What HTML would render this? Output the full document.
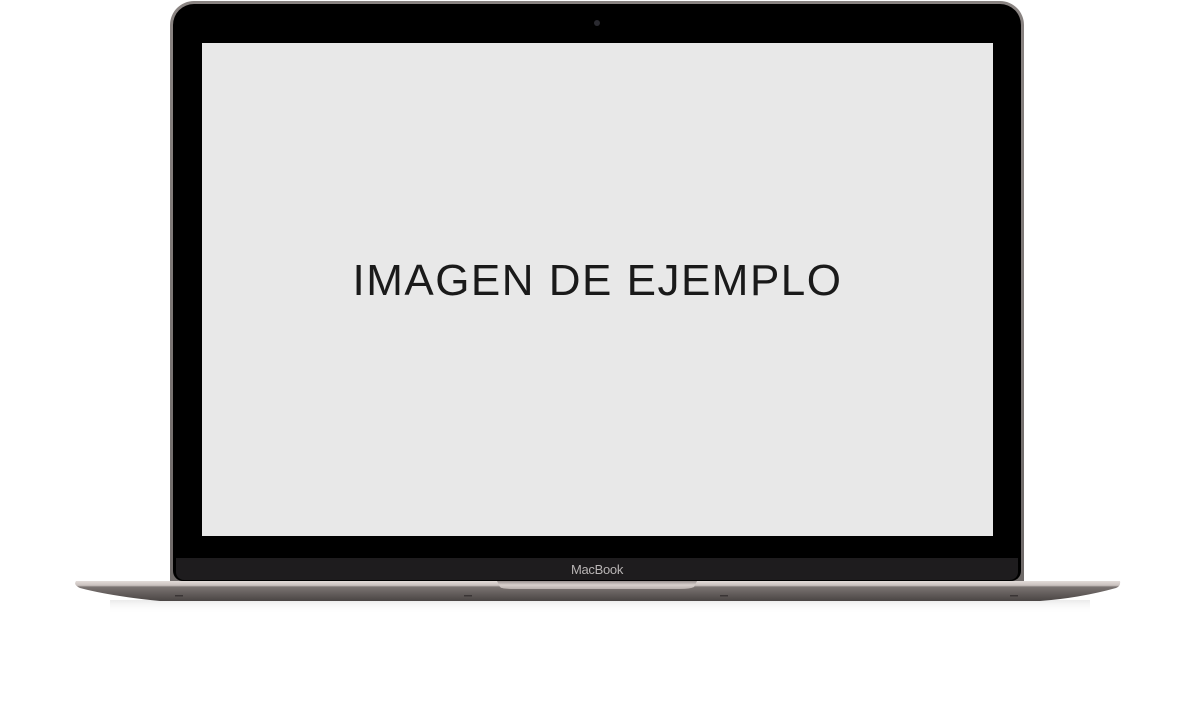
<!DOCTYPE html>
<html><head><style>
html,body{margin:0;padding:0;background:#fff;width:1204px;height:727px;overflow:hidden;position:relative;font-family:"Liberation Sans",sans-serif}
.lid{position:absolute;left:170px;top:1px;width:854px;height:585px;border-radius:24px 24px 0 0;background:linear-gradient(#8a8482,#6e6968);}
.inner{position:absolute;left:173px;top:4px;width:848px;height:577px;border-radius:21px 21px 10px 10px;background:#000;}
.chin{position:absolute;left:176px;top:558px;width:842px;height:22px;background:#1e1c1e;border-radius:0 0 8px 8px;}
.screen{position:absolute;left:202px;top:43px;width:791px;height:493px;background:#e8e8e8;}
.cam{position:absolute;left:594px;top:20px;width:6px;height:6px;border-radius:50%;background:#2a2a30;}
.txt{position:absolute;left:202px;width:791px;top:253px;text-align:center;font-size:44px;letter-spacing:1.5px;color:#1a1a1a;line-height:56px}
.mb{position:absolute;left:0;width:1194px;top:562px;text-align:center;font-size:13px;color:#b8b4b4;letter-spacing:-0.3px}
</style></head><body>
<div class="lid"></div>
<div class="inner"></div>
<div class="chin"></div>
<div class="screen"></div>
<div class="cam"></div>
<div class="txt">IMAGEN DE EJEMPLO</div>
<div class="mb">MacBook</div>
<svg style="position:absolute;left:0;top:0" width="1204" height="727">
<defs>
<linearGradient id="b" x1="0" y1="0" x2="0" y2="1">
<stop offset="0" stop-color="#e2dbd8"/><stop offset="0.22" stop-color="#c9c1be"/><stop offset="0.3" stop-color="#7a7371"/><stop offset="1" stop-color="#4a4544"/>
</linearGradient>
<linearGradient id="n" x1="0" y1="0" x2="0" y2="1">
<stop offset="0" stop-color="#9a9290"/><stop offset="0.5" stop-color="#d8d0cd"/><stop offset="1" stop-color="#b8b0ad"/>
</linearGradient>
<linearGradient id="s" x1="0" y1="0" x2="0" y2="1">
<stop offset="0" stop-color="#ddd" stop-opacity="0.6"/><stop offset="1" stop-color="#fff" stop-opacity="0"/>
</linearGradient>
</defs>
<rect x="110" y="600" width="980" height="14" fill="url(#s)"/>
<path d="M76 581 L1120 581 Q1121 586 1116 588 Q1080 598 1040 601 L160 601 Q110 596 80 588 Q73 585 76 581 Z" fill="url(#b)"/>
<path d="M497 581 L697 581 L694 587 Q690 589 680 589 L514 589 Q502 589 500 587 Z" fill="url(#n)"/>
<rect x="175" y="595" width="8" height="1.5" fill="#3a3535"/>
<rect x="464" y="595" width="8" height="1.5" fill="#3a3535"/>
<rect x="720" y="595" width="8" height="1.5" fill="#3a3535"/>
<rect x="1010" y="595" width="8" height="1.5" fill="#3a3535"/>
</svg>
</body></html>
